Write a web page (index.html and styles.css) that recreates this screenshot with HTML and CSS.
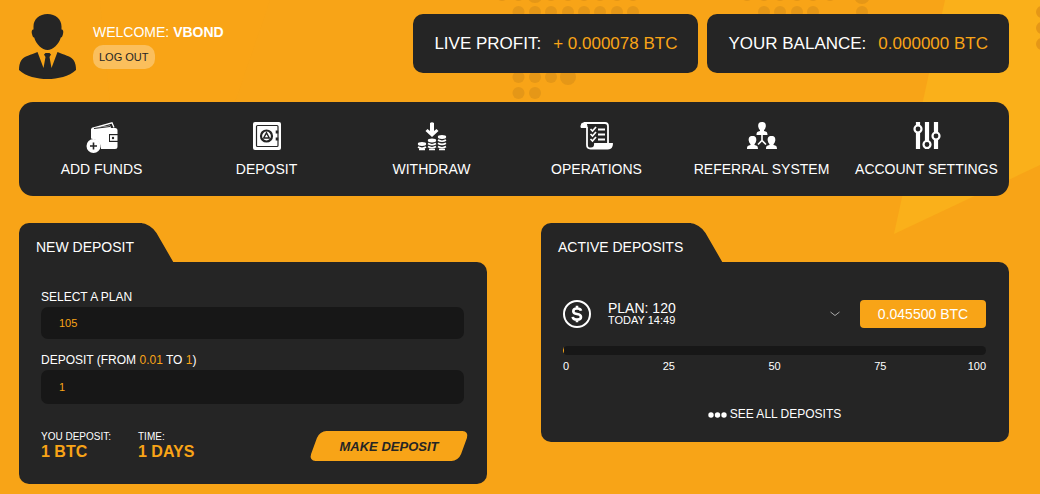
FILE: index.html
```html
<!DOCTYPE html>
<html lang="en">
<head>
    <meta charset="UTF-8">
    <meta name="viewport" content="width=device-width, initial-scale=1">
    <title>Account</title>
    <link rel="stylesheet" href="styles.css">
</head>
<body>
<svg class="backdrop" width="1040" height="494" viewBox="0 0 1040 494" aria-hidden="true">
    <path fill="#fab01a" d="M945 0h95v165l-146 69z"/>
    <path fill="#f9a617" d="M100 0h170l-35 102H110z" opacity=".4"/>
    <g fill="#e59717">
        <circle cx="502" cy="-5" r="6"/><circle cx="518.5" cy="-5" r="6"/><circle cx="535" cy="-5" r="8"/>
        <circle cx="551" cy="-5" r="6"/><circle cx="568" cy="-5" r="6"/><circle cx="584" cy="-5" r="6"/>
        <circle cx="600" cy="-5" r="6"/><circle cx="617" cy="-5" r="6"/><circle cx="633" cy="-5" r="6"/>
        <circle cx="518.5" cy="12" r="6"/><circle cx="535" cy="12" r="6"/><circle cx="551" cy="12" r="6"/>
        <circle cx="568" cy="12" r="6"/><circle cx="584" cy="12" r="6"/><circle cx="600" cy="12" r="6"/>
        <circle cx="617" cy="12" r="6"/><circle cx="633" cy="12" r="6"/>
        <circle cx="518.5" cy="77" r="6"/><circle cx="535" cy="77" r="6"/><circle cx="551" cy="77" r="6"/>
        <circle cx="568" cy="77" r="8"/><circle cx="518.5" cy="93" r="6"/><circle cx="535" cy="93" r="6"/>
        <circle cx="747" cy="-5" r="6"/><circle cx="764" cy="-5" r="6"/><circle cx="780" cy="-5" r="6"/>
        <circle cx="797" cy="-5" r="6"/><circle cx="813" cy="-5" r="6"/><circle cx="830" cy="-5" r="6"/>
        <circle cx="862" cy="-4" r="8"/>
        <circle cx="764" cy="12" r="6"/><circle cx="780" cy="12" r="6"/><circle cx="797" cy="12" r="6"/>
        <circle cx="813" cy="12" r="6"/><circle cx="862" cy="12" r="6"/>
        <circle cx="1042" cy="12" r="6"/><circle cx="1042" cy="28" r="6"/><circle cx="1042" cy="44" r="6"/>
    </g>
</svg>

<div class="page">
    <header class="header">
        <div class="user">
            <svg width="57" height="65" viewBox="0 0 57 65" fill="#252525" aria-hidden="true">
                <path d="M28.500 0C36.500 0 42.500 5 42.500 12.500V15.500C44.500 15.500 44.500 18 44 20C43.600 21.800 43 23.500 41.800 23.500C40 30 34 36 28.500 36S17 30 15.200 23.500C14 23.500 13.400 21.800 13 20C12.500 18 12.500 15.500 14.500 15.500V12.500C14.500 5 20.500 0 28.500 0Z"/>
                <path d="M18.500 38L24.500 54L26.500 43L25 40.500L26.500 39H30.500L32 40.500L30.500 43L32.500 54L38.500 38C45 41 52 42 54.500 46C56.500 49 57 52 57 56C50 62.500 39 65 28.500 65S7 62.500 0 56C0 52 .5 49 2.500 46C5 42 12 41 18.500 38Z"/>
            </svg>
            <div class="user-info">
                <span class="welcome">WELCOME: <b>VBOND</b></span>
                <a class="logout" href="#">LOG OUT</a>
            </div>
        </div>
        <div class="stats">
            <div class="stat">LIVE PROFIT: <span class="accent">+ 0.000078 BTC</span></div>
            <div class="stat">YOUR BALANCE: <span class="accent">0.000000 BTC</span></div>
        </div>
    </header>

    <nav class="menu">
        <a href="#">
            <svg width="34" height="32" viewBox="0 0 34 32" aria-hidden="true">
                <path fill="none" stroke="#fff" stroke-width="1.300" d="M7 6.500L27 .8L29 5.500"/>
                <path fill="#fff" d="M6 6.500L25 3.500L26 6H30Q32.500 6 32.500 8.500V12H24V20H32.500V24.500Q32.500 27 30 27H16Q16 18 6 16.500Z"/>
                <path fill="none" stroke="#252525" d="M9 6.500L25 4.500"/>
                <path fill="#fff" d="M25 13.200H32.500V18.800H25Z"/>
                <circle cx="28" cy="16" r="1.200" fill="#252525"/>
                <circle cx="8.500" cy="24" r="7" fill="#fff"/>
                <path stroke="#252525" stroke-width="1.600" d="M8.500 20.500v7M5 24h7"/>
            </svg>
            ADD FUNDS
        </a>
        <a href="#">
            <svg width="34" height="32" viewBox="0 0 34 32" aria-hidden="true">
                <rect x="3" y="0" width="28" height="28" rx="2" fill="#fff"/>
                <rect x="6.500" y="3.500" width="21.500" height="21" rx="1" fill="none" stroke="#252525" stroke-width="1.200"/>
                <circle cx="16.500" cy="14" r="5.500" fill="none" stroke="#252525" stroke-width="2.200"/>
                <path fill="none" stroke="#252525" stroke-width="1.400" d="M16.500 10.800L19.300 16H13.700Z"/>
                <path stroke="#252525" stroke-width="2.600" d="M27 8.500v3M27 15.500v3"/>
            </svg>
            DEPOSIT
        </a>
        <a href="#">
            <svg width="34" height="32" viewBox="0 0 34 32" fill="#fff" aria-hidden="true">
                <path d="M15 1Q17 -.5 19 1V9L21.500 7L23.500 9L17 15L10.500 9L12.500 7L15 9Z"/>
                <ellipse cx="7" cy="22" rx="4.200" ry="1.900"/>
                <ellipse cx="17" cy="18.500" rx="4.200" ry="1.900"/>
                <ellipse cx="27" cy="15" rx="4.200" ry="1.900"/>
                <path fill="none" stroke="#fff" stroke-width="1.700" d="M3 25q4 2.500 8 0M13 21.500q4 2.500 8 0M13 24.500q4 2.500 8 0M23 18q4 2.500 8 0M23 21.200q4 2.500 8 0M23 24.500q4 2.500 8 0M4 27.500h6M14 27.500h6M24 27.500h6"/>
            </svg>
            WITHDRAW
        </a>
        <a href="#">
            <svg width="34" height="32" viewBox="0 0 34 32" fill="none" stroke="#fff" aria-hidden="true">
                <path stroke-width="1.800" d="M4 1H25Q28 1 28 4V21M7 5V23Q7 26.500 10.500 26.500H28Q32 26.500 32 22H15Q15 26.500 11 26.500"/>
                <path fill="#fff" d="M1 5.500V4Q1 .8 4 .8Q7 .8 7 4V5.500Z"/>
                <path fill="#fff" d="M15 22.500H32Q31.500 26 28 26.500H12.500Q15 25 15 22.500Z"/>
                <path stroke-width="1.700" d="M10.500 7L12.500 9L16 5M10.500 12L12.500 14L16 10M10.500 17L12.500 19L16 15"/>
                <path stroke-width="2" d="M18 7.500h7M18 12.500h7M18 17.500h7"/>
            </svg>
            OPERATIONS
        </a>
        <a href="#">
            <svg width="34" height="32" viewBox="0 0 34 32" fill="#fff" aria-hidden="true">
                <g id="person">
                    <path d="M17 0C20.300 0 21 2 20.800 4.500C20.600 6 20 7.200 19 8.200V9C21.500 9.600 22.500 10 22.500 13H11.500C11.500 10 12.500 9.600 15 9V8.200C14 7.200 13.400 6 13.200 4.500C13 2 13.700 0 17 0Z"/>
                </g>
                <use href="#person" x="-9.500" y="14"/>
                <use href="#person" x="9.500" y="14"/>
                <path fill="none" stroke="#fff" stroke-width="1.600" d="M17 13V19M13 22.500L17 18.500L21 22.500"/>
            </svg>
            REFERRAL SYSTEM
        </a>
        <a href="#">
            <svg width="34" height="32" viewBox="0 0 34 32" aria-hidden="true">
                <path stroke="#fff" stroke-width="4.200" d="M8 0V27M17 0V27M26 0V27"/>
                <g fill="#252525" stroke="#fff" stroke-width="2.200">
                    <circle cx="8" cy="7" r="3.500"/>
                    <circle cx="17" cy="22.500" r="3.500"/>
                    <circle cx="26" cy="14" r="3.500"/>
                </g>
            </svg>
            ACCOUNT SETTINGS
        </a>
    </nav>

    <main class="panels">
        <section class="panel">
            <h2 class="tab">NEW DEPOSIT</h2>
            <form class="panel-body">
                <label for="plan">SELECT A PLAN</label>
                <select id="plan" class="field">
                    <option>105</option>
                </select>
                <label for="amount">DEPOSIT (FROM <span class="accent">0.01</span> TO <span class="accent">1</span>)</label>
                <input id="amount" class="field field-amount" type="text" value="1">
                <div class="summary">
                    <div class="summary-item">YOU DEPOSIT:<b>1 BTC</b></div>
                    <div class="summary-item">TIME:<b>1 DAYS</b></div>
                    <button class="submit" type="button">MAKE DEPOSIT</button>
                </div>
            </form>
        </section>

        <section class="panel">
            <h2 class="tab">ACTIVE DEPOSITS</h2>
            <div class="panel-body active-body">
                <div class="deposit">
                    <svg width="28" height="30" viewBox="0 0 28 30" fill="none" stroke="#fff" aria-hidden="true">
                        <circle cx="14" cy="15" r="13" stroke-width="2"/>
                        <path stroke-width="2.600" d="M18 11.800Q17.500 9.500 14 9.500Q10.300 9.500 10.300 12.200Q10.300 14.500 14 15Q18 15.500 18 18Q18 20.600 14 20.600Q10 20.600 9.700 17.800M14 6.800V9.500M14 20.500V23.300"/>
                    </svg>
                    <div class="deposit-info">
                        <span class="plan-name">PLAN: 120</span>
                        <span class="plan-date">TODAY 14:49</span>
                    </div>
                    <button class="toggle" type="button" aria-label="Details">
                        <svg width="10" height="6" viewBox="0 0 10 6" fill="none" stroke="#aaa"><path d="M.5 1L5 4.500L9.500 1"/></svg>
                    </button>
                    <span class="sum">0.045500 BTC</span>
                </div>
                <progress class="bar" value="0.2" max="100" aria-label="Progress"></progress>
                <div class="scale">
                    <span>0</span><span>25</span><span>50</span><span>75</span><span>100</span>
                </div>
                <a class="see-all" href="#">
                    <svg width="19" height="6" viewBox="0 0 19 6" fill="#fff" aria-hidden="true"><circle cx="3" cy="3" r="2.700"/><circle cx="9.500" cy="3" r="2.700"/><circle cx="16" cy="3" r="2.700"/></svg>
                    SEE ALL DEPOSITS
                </a>
            </div>
        </section>
    </main>
</div>
</body>
</html>
```
FILE: styles.css
```css
* {
    box-sizing: border-box;
}

body {
    margin: 0;
    font-family: "Liberation Sans", Arial, sans-serif;
    font-size: 14px;
    color: #fff;
    background-color: #f8a417;
}

a {
    color: inherit;
    text-decoration: none;
}

svg {
    display: block;
    flex-shrink: 0;
}

.backdrop {
    position: absolute;
    top: 0;
    left: 0;
    z-index: -1;
}

.page {
    padding: 14px 31px 10px 19px;
}

.accent {
    color: #f8a417;
}

/* header */
.header {
    display: flex;
    justify-content: space-between;
    align-items: flex-start;
    margin-bottom: 23px;
}

.user {
    display: flex;
    gap: 17px;
}

.user-info {
    display: flex;
    flex-direction: column;
    align-items: flex-start;
    gap: 5px;
    padding-top: 10px;
}

.welcome {
    line-height: 16px;
}

.logout {
    padding: 0 6px;
    border-radius: 10px;
    background-color: rgba(255, 255, 255, 0.3);
    color: #252525;
    font-size: 11px;
    line-height: 24px;
}

.stats {
    display: flex;
    gap: 9px;
}

.stat {
    display: flex;
    justify-content: space-between;
    gap: 12px;
    padding: 0 21px;
    border-radius: 10px;
    background-color: #252525;
    font-size: 17px;
    line-height: 59px;
    white-space: nowrap;
}

/* main menu */
.menu {
    display: grid;
    grid-template-columns: repeat(6, 1fr);
    padding: 20px 0 18px;
    border-radius: 14px;
    background-color: #252525;
    margin-bottom: 27px;
}

.menu a {
    display: flex;
    flex-direction: column;
    align-items: center;
    gap: 6px;
    line-height: 18px;
}

/* panels */
.panels {
    display: grid;
    grid-template-columns: 1fr 1fr;
    gap: 54px;
    align-items: start;
}

.tab {
    position: relative;
    z-index: 0;
    width: max-content;
    margin: 0;
    padding: 10px 28px 0 17px;
    font-size: 14px;
    font-weight: normal;
    line-height: 29px;
}

.tab::before,
.tab::after {
    content: "";
    position: absolute;
    top: 0;
    bottom: 0;
    z-index: -1;
    background-color: #252525;
}

.tab::before {
    left: 0;
    right: 20px;
    border-radius: 10px 0 0 0;
}

.tab::after {
    right: 0;
    width: 60px;
    border-radius: 0 10px 0 0;
    transform: skewX(30deg);
}

.panel-body {
    padding: 29px 23px 23px 22px;
    border-radius: 0 10px 10px 10px;
    background-color: #252525;
}

.panel-body label {
    display: block;
    font-size: 12px;
    line-height: 12px;
    margin-bottom: 4px;
}

.field {
    display: block;
    width: 100%;
    height: 32px;
    margin: 0 0 15px;
    padding: 0 18px;
    border: none;
    border-radius: 7px;
    background-color: #171717;
    color: #f8a417;
    font-family: inherit;
    font-size: 11px;
    appearance: none;
}

.field-amount {
    height: 34px;
    margin-bottom: 27px;
}

.summary {
    display: flex;
    gap: 27px;
}

.summary-item {
    font-size: 10px;
    line-height: 12px;
}

.summary-item b {
    display: block;
    color: #f8a417;
    font-size: 16px;
    line-height: 18px;
}

.submit {
    position: relative;
    z-index: 0;
    width: 150px;
    height: 30px;
    margin-left: auto;
    padding: 0;
    border: none;
    background: none;
    color: #252525;
    font-family: inherit;
    font-size: 13px;
    font-weight: bold;
    font-style: italic;
    cursor: pointer;
}

.submit::before {
    content: "";
    position: absolute;
    inset: 0;
    z-index: -1;
    border-radius: 7px;
    background-color: #f8a417;
    transform: skewX(-20deg);
}

/* active deposits */
.active-body {
    padding-top: 37px;
    padding-bottom: 20px;
}

.deposit {
    display: flex;
    align-items: center;
    margin-bottom: 17px;
}

.deposit-info {
    display: flex;
    flex-direction: column;
    padding-left: 17px;
    line-height: 12px;
}

.plan-date {
    font-size: 11px;
}

.toggle {
    margin-left: auto;
    margin-right: 20px;
    padding: 0;
    border: none;
    background: none;
    cursor: pointer;
}

.sum {
    width: 126px;
    border-radius: 4px;
    background-color: #f8a417;
    line-height: 28px;
    text-align: center;
}

.bar {
    display: block;
    width: 100%;
    height: 9px;
    border: none;
    border-radius: 5px;
    overflow: hidden;
    background-color: #171717;
    appearance: none;
}

.bar::-webkit-progress-bar {
    background-color: #171717;
}

.bar::-webkit-progress-value {
    background-color: #f8a417;
}

.scale {
    display: grid;
    grid-template-columns: 1fr 2fr 2fr 2fr 1fr;
    margin-top: 5px;
    font-size: 11px;
    line-height: 12px;
    text-align: center;
}

.scale span:first-child {
    text-align: left;
}

.scale span:last-child {
    text-align: right;
}

.see-all {
    display: flex;
    justify-content: center;
    align-items: center;
    gap: 3px;
    margin-top: 35px;
    font-size: 12px;
    line-height: 15px;
}
```
